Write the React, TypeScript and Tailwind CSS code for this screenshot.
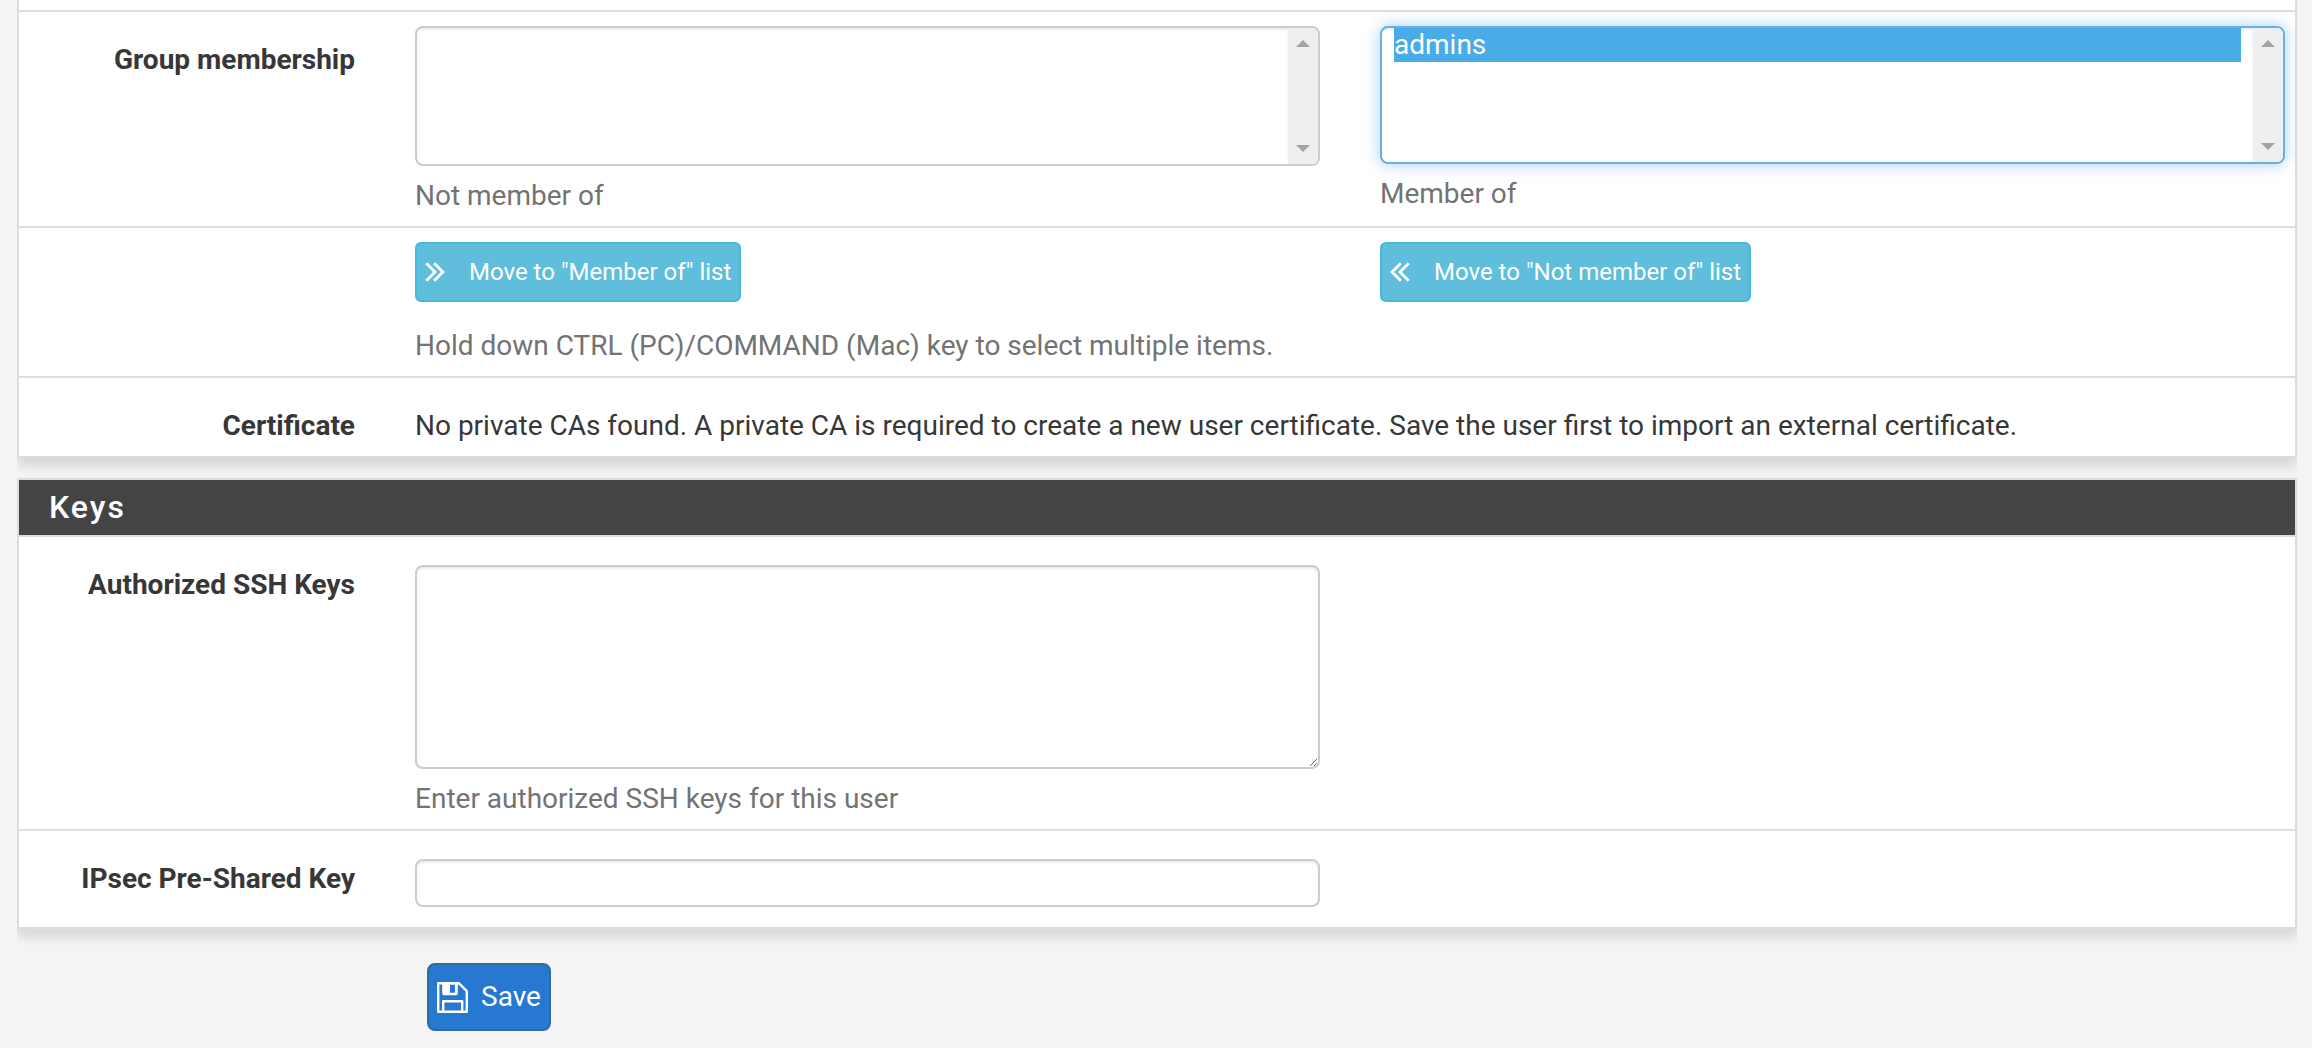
import type { ReactNode } from "react";

function Row({ label, children, last, className = "" }: { label?: string; children: ReactNode; last?: boolean; className?: string }) {
  return (
    <div className={`flex ${last ? "" : "border-b-2 border-[#dedede]"} ${className}`}>
      <div className="w-[336px] shrink-0 text-right font-bold">{label}</div>
      <div className="ml-[60px] flex flex-1 items-start gap-[60px]">{children}</div>
    </div>
  );
}

function ListBox({ options, focused }: { options: string[]; focused?: boolean }) {
  return (
    <div
      className={`flex overflow-hidden rounded-[8px] border-2 bg-white ${
        focused
          ? "h-[138px] border-[#66afe9] shadow-[0_0_16px_rgba(102,175,233,0.6)]"
          : "h-[140px] border-[#ccc]"
      }`}
    >
      <ul className="flex-1 px-[12px] shadow-[inset_0_2px_2px_rgba(0,0,0,0.075)]">
        {options.map((option) => (
          <li key={option} className="h-[34px] bg-[#47ace8] leading-[33px] text-white">
            {option}
          </li>
        ))}
      </ul>
      <div className="flex w-[30px] flex-col items-center justify-between bg-[#efefef] py-[12px]">
        <svg width="14" height="7" viewBox="0 0 14 7" fill="#a3a3a3">
          <path d="M7 0l7 7H0z" />
        </svg>
        <svg width="14" height="7" viewBox="0 0 14 7" fill="#a3a3a3">
          <path d="M0 0h14L7 7z" />
        </svg>
      </div>
    </div>
  );
}

function Chevrons({ left }: { left?: boolean }) {
  return (
    <svg width="20" height="20" viewBox="0 0 20 20" fill="none" stroke="currentColor" strokeWidth="2.8" className={left ? "-scale-x-100" : ""}>
      <path d="M1.3 1.3 10 10l-8.7 8.7M9.2 1.3 17.9 10l-8.7 8.7" />
    </svg>
  );
}

function MoveButton({ left, children, className }: { left?: boolean; children: ReactNode; className: string }) {
  return (
    <button
      type="button"
      className={`flex h-[60px] items-center rounded-[6px] border-2 border-[#46b8da] bg-[#5fbedb] pl-[8px] text-[24px] whitespace-nowrap text-white ${className}`}
    >
      <Chevrons left={left} />
      <span className="ml-[24px]">{children}</span>
    </button>
  );
}

function Floppy() {
  return (
    <svg width="31" height="31" viewBox="0 0 31 31" fill="none" stroke="currentColor" strokeWidth="2.4" strokeLinejoin="round">
      <path d="M1.2 1.2h20.6l8 7.9v20.7H1.2z" />
      <path d="M6.2 29.5V19.2h19V29.5" />
      <path d="M5.2 1.2h15.6v10.2q0 1.8-1.8 1.8H7q-1.8 0-1.8-1.8zM13 2.6v8.2h5V2.6z" fill="currentColor" fillRule="evenodd" stroke="none" />
    </svg>
  );
}

const field = "w-[905px] shrink-0";
const help = "mt-[10px] text-[#737373]";
const input = "block w-full rounded-[8px] border-2 border-[#ccc] bg-white shadow-[inset_0_2px_2px_rgba(0,0,0,0.075)]";
const panel = "border-x-2 border-b-2 border-[#dcdcdc] bg-white shadow-[0_8px_10px_rgba(0,0,0,0.12)] [clip-path:inset(0_0_-22px_0)]";

export default function App() {
  return (
    <div className="h-[1048px] w-[2312px] overflow-hidden bg-[#f4f4f4] pr-[15px] pl-[17px] font-['Roboto',sans-serif] text-[28px] leading-[40px] text-[#373737]">
      <section className={panel}>
        <div className="h-[12px] border-b-2 border-[#dedede]" />
        <Row label="Group membership" className="h-[216px] pt-[14px] [&>div:first-child]:pt-[14px]">
          <div className={field}>
            <ListBox options={[]} />
            <p className={help}>Not member of</p>
          </div>
          <div className={field}>
            <ListBox options={["admins"]} focused />
            <p className={help}>Member of</p>
          </div>
        </Row>
        <Row className="h-[150px] pt-[14px]">
          <div className={field}>
            <MoveButton className="w-[326px]">Move to "Member of" list</MoveButton>
            <p className="mt-[24px] text-[#737373]">Hold down CTRL (PC)/COMMAND (Mac) key to select multiple items.</p>
          </div>
          <div className={field}>
            <MoveButton left className="w-[371px]">Move to "Not member of" list</MoveButton>
          </div>
        </Row>
        <Row label="Certificate" last className="h-[78px] pt-[28px]">
          <p>No private CAs found. A private CA is required to create a new user certificate. Save the user first to import an external certificate.</p>
        </Row>
      </section>

      <section className={`${panel} mt-[20px] border-t-2`}>
        <h2 className="h-[57px] border-b-2 border-[#dcdcdc] bg-[#444] pl-[30px] text-[32px] leading-[54px] font-medium tracking-[2px] text-white">Keys</h2>
        <Row label="Authorized SSH Keys" className="h-[294px] pt-[28px]">
          <div className={field}>
            <textarea className={`${input} h-[204px] resize`} />
            <p className={help}>Enter authorized SSH keys for this user</p>
          </div>
        </Row>
        <Row label="IPsec Pre-Shared Key" last className="h-[96px] pt-[28px]">
          <div className={field}>
            <input type="text" className={`${input} h-[48px]`} />
          </div>
        </Row>
      </section>

      <button
        type="button"
        className="mt-[34px] ml-[410px] flex h-[68px] w-[124px] items-center rounded-[8px] border-2 border-[#2e6da4] bg-[#2678d0] pl-[8px] text-white"
      >
        <Floppy />
        <span className="ml-[13px]">Save</span>
      </button>
    </div>
  );
}
